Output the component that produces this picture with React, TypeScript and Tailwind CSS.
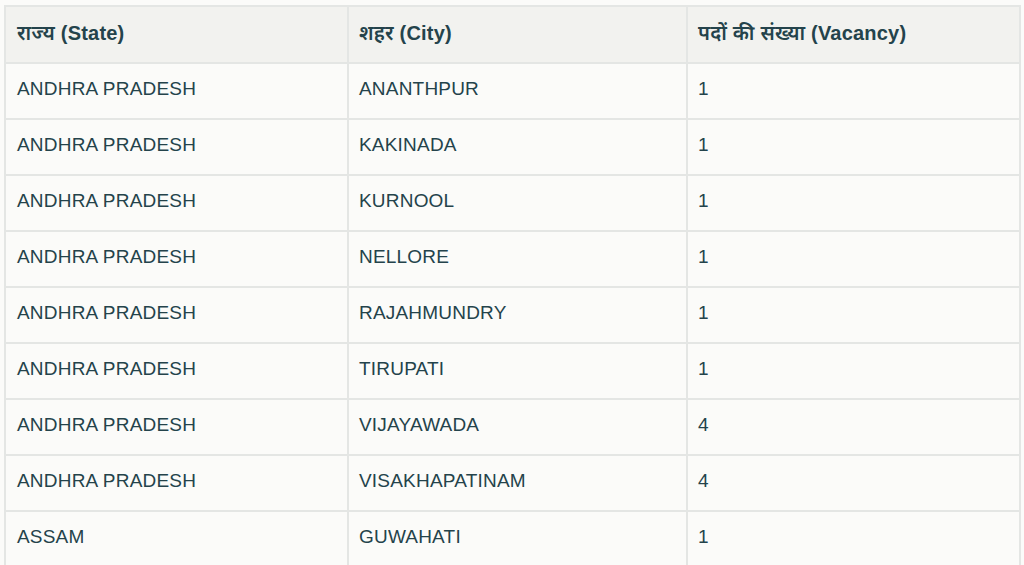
const rows: [string, string, number][] = [
  ['ANDHRA PRADESH', 'ANANTHPUR', 1],
  ['ANDHRA PRADESH', 'KAKINADA', 1],
  ['ANDHRA PRADESH', 'KURNOOL', 1],
  ['ANDHRA PRADESH', 'NELLORE', 1],
  ['ANDHRA PRADESH', 'RAJAHMUNDRY', 1],
  ['ANDHRA PRADESH', 'TIRUPATI', 1],
  ['ANDHRA PRADESH', 'VIJAYAWADA', 4],
  ['ANDHRA PRADESH', 'VISAKHAPATINAM', 4],
  ['ASSAM', 'GUWAHATI', 1],
]

export default function App() {
  return (
    <div
      className="min-h-screen bg-[#fbfbf9] pl-[4px] pt-[5px] text-[#24434b]"
      style={{ fontFamily: '"Liberation Sans", "Noto Sans", Arial, sans-serif' }}
    >
      <table className="w-[1017px] table-fixed border-collapse text-[19px] tracking-[0.2px]">
        <colgroup>
          <col className="w-[343px]" />
          <col className="w-[339px]" />
          <col />
        </colgroup>
        <thead>
          <tr className="h-[57px] bg-[#f2f2ef] text-[20px]">
            <th className="border-2 border-[#e4e6e4] pl-[11px] pr-3 pb-[3px] text-left font-semibold">राज्य (State)</th>
            <th className="border-2 border-[#e4e6e4] pl-[10px] pr-3 pb-[3px] text-left font-semibold">शहर (City)</th>
            <th className="border-2 border-[#e4e6e4] pl-[10px] pr-3 pb-[3px] text-left font-semibold">पदों की संख्या (Vacancy)</th>
          </tr>
        </thead>
        <tbody>
          {rows.map(([state, city, n], i) => (
            <tr key={i} className="h-[56px]">
              <td className="border-2 border-[#e4e6e4] pl-[11px] pr-3 pb-[3px]">{state}</td>
              <td className="border-2 border-[#e4e6e4] pl-[10px] pr-3 pb-[3px]">{city}</td>
              <td className="border-2 border-[#e4e6e4] pl-[10px] pr-3 pb-[3px]">{n}</td>
            </tr>
          ))}
        </tbody>
      </table>
    </div>
  )
}
